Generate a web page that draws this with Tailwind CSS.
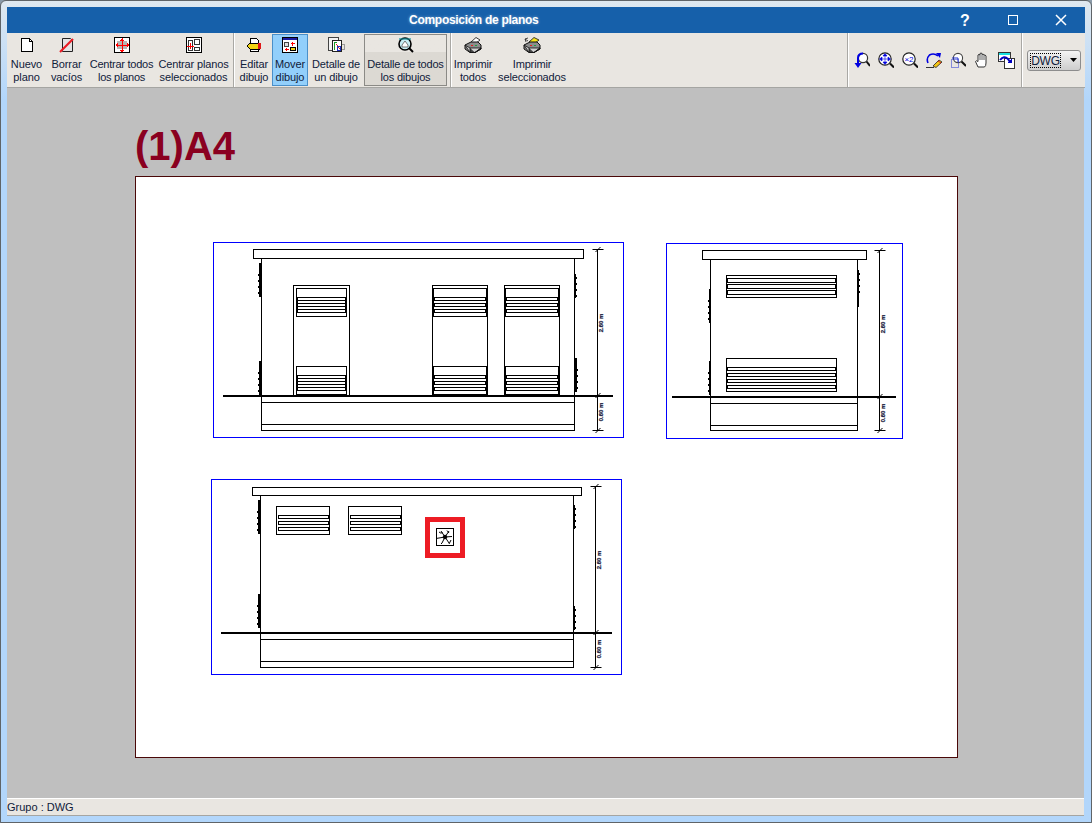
<!DOCTYPE html>
<html lang="es">
<head>
    <meta charset="UTF-8" />
    <title>Composición de planos</title>
    <script src="https://cdn.jsdelivr.net/npm/@tailwindcss/browser@4"></script>
</head>
<body class="bg-[#8a9aa8]">

    <!-- Ventana -->
    <div class="w-[1092px] h-[823px] flex flex-col pt-[7px] pl-[7px] pr-[6px] pb-[6px] rounded-t-[6px] border border-[#5f6468] bg-linear-to-b from-[#dfe8ef] from-[0%] to-[#b2d6fb] to-[12%] [font-family:'Liberation_Sans',Arial,sans-serif] text-[11px] leading-[13px] text-[#10203a]">

        <!-- Barra de título -->
        <div class="h-[26px] -ml-px -mt-px shrink-0 flex items-center bg-[#1660aa] text-white relative">
            <span class="ml-[402px] mt-[1px] text-[12px] font-bold tracking-[-0.28px] [text-shadow:0_0_3px_rgba(255,255,255,0.45)]">Composición de planos</span>
            <span class="ml-auto w-[20px] text-center text-[16px] font-bold mr-[32px]">?</span>
            <svg class="w-[12px] h-[12px] mr-[36px]" viewBox="0 0 12 12"><rect x="1.5" y="1.5" width="9" height="9" fill="none" stroke="#fff"/><line x1="1" y1="1.5" x2="11" y2="1.5" stroke="#fff"/></svg>
            <svg class="w-[12px] h-[12px] mr-[18px]" viewBox="0 0 12 12"><path d="M1 1 L11 11 M11 1 L1 11" stroke="#fff" stroke-width="1.5"/></svg>
        </div>

        <!-- Barra de herramientas -->
        <div class="h-[55px] -ml-px shrink-0 flex items-stretch bg-[#e9e6e1] border-b border-[#a5a5a2]">
            <div class="flex items-stretch py-px">
                <div class="w-[39px] flex flex-col items-center pt-[3px]">
                    <svg class="w-[18px] h-[16px] mb-[5px]" viewBox="0 0 18 16" shape-rendering="crispEdges"><path d="M3.5 1.5 H11.5 L14.5 4.5 V14.5 H3.5 Z" fill="#fff" stroke="#000"/><path d="M11.5 1.5 V4.5 H14.5" fill="none" stroke="#000"/></svg>
                    <span class="text-center tracking-[-0.1px]">Nuevo<br>plano</span>
                </div>
                <div class="w-[41px] flex flex-col items-center pt-[3px]">
                    <svg class="w-[18px] h-[16px] mb-[5px]" viewBox="0 0 18 16"><path d="M4.5 1.5 H12.5 L14.5 3.5 V14.5 H4.5 Z" fill="#e4e4e4" stroke="#222"/><path d="M2 15 L15 2" stroke="#ec1c24" stroke-width="2.2"/></svg>
                    <span class="text-center tracking-[-0.1px]">Borrar<br>vacíos</span>
                </div>
                <div class="w-[69px] flex flex-col items-center pt-[3px]">
                    <svg class="w-[18px] h-[16px] mb-[5px]" viewBox="0 0 18 16" shape-rendering="crispEdges"><rect x="1.5" y="0.5" width="15" height="15" fill="#fff" stroke="#000"/><rect x="4" y="4" width="10" height="8" fill="#b5b5b5"/><path d="M9 1 V15 M3 8 H15 M7 3 H11 M8 2 H10 M7 13 H11 M8 14 H10 M4 6 V10 M3 7 V9 M14 6 V10 M15 7 V9" stroke="#f00"/></svg>
                    <span class="text-center tracking-[-0.25px]">Centrar todos<br>los planos</span>
                </div>
                <div class="w-[75px] flex flex-col items-center pt-[3px]">
                    <svg class="w-[18px] h-[16px] mb-[5px]" viewBox="0 0 18 16" shape-rendering="crispEdges"><rect x="1.5" y="0.5" width="15" height="15" fill="#fff" stroke="#000"/><rect x="9.5" y="2.5" width="5" height="5" fill="#fff" stroke="#333"/><rect x="9.5" y="10.5" width="5" height="3" fill="#fff" stroke="#333"/><rect x="3.5" y="3.5" width="4" height="10" fill="#fff" stroke="#333"/><path d="M2 9 H9 M5.5 6 V12" stroke="#f00"/></svg>
                    <span class="text-center tracking-[-0.15px]">Centrar planos<br>seleccionados</span>
                </div>
            </div>
            <div class="w-[2px] ml-[2px] mr-px bg-[#a9a8a4] border-r border-white"></div>
            <div class="flex items-stretch py-px">
                <div class="w-[36px] flex flex-col items-center pt-[3px]">
                    <svg class="w-[18px] h-[16px] mb-[5px]" viewBox="0 0 18 16" shape-rendering="crispEdges"><path d="M5.5 1.5 H11.5 L13.5 3.5 V14.5 H5.5 Z" fill="#fff" stroke="#000"/><path d="M2 9 L5 6 H14 V12 H5 Z" fill="#f2d513" stroke="#000"/><rect x="13" y="6" width="3" height="6" fill="#e01818"/></svg>
                    <span class="text-center tracking-[-0.1px]">Editar<br>dibujo</span>
                </div>
                <div class="w-[36px] flex flex-col items-center pt-[3px] bg-[#92cffb] border border-[#4a8fc9]">
                    <svg class="w-[18px] h-[16px] mb-[5px] -mt-px" viewBox="0 0 18 16" shape-rendering="crispEdges"><rect x="1.5" y="0.5" width="15" height="15" fill="#fff" stroke="#000"/><rect x="2" y="1" width="14" height="2" fill="#1a1aa0"/><rect x="3.5" y="5.5" width="4" height="4" fill="#ddd" stroke="#444"/><rect x="9.5" y="10.5" width="5" height="3" fill="#f2d513" stroke="#000"/><path d="M11.5 5 V9 M9.5 6 H13.5 M5.5 11 V14 M3.5 12.5 H7.5" stroke="#f00"/></svg>
                    <span class="text-center tracking-[-0.1px]">Mover<br>dibujo</span>
                </div>
                <div class="w-[56px] flex flex-col items-center pt-[3px]">
                    <svg class="w-[18px] h-[16px] mb-[5px]" viewBox="0 0 18 16" shape-rendering="crispEdges"><rect x="1.5" y="0.5" width="10" height="13" fill="#f3f3f3" stroke="#444"/><rect x="5.5" y="3.5" width="9" height="11" fill="#fff" stroke="#222"/><path d="M7 5 V13 M7 5 H10" stroke="#1a9a2a"/><path d="M9 7 L13 12" stroke="#e02020"/><rect x="10" y="9" width="3" height="4" fill="none" stroke="#2030c0"/><path d="M15 7 H17 V12 H15" fill="none" stroke="#999"/></svg>
                    <span class="text-center tracking-[-0.15px]">Detalle de<br>un dibujo</span>
                </div>
                <div class="w-[83px] flex flex-col items-center pt-[3px] border border-[#8b8a86] bg-linear-to-b from-[#e9e6e1] from-[35%] to-[#dcd9d3] to-[35%]">
                    <svg class="w-[18px] h-[16px] mb-[5px] -mt-px" viewBox="0 0 18 16"><circle cx="8" cy="7" r="6" fill="#c7eef5" stroke="#000" stroke-width="1.6"/><path d="M5 8 L8 4 L11 8 V10 H5 Z" fill="#fff" stroke="#555" stroke-width="0.8"/><path d="M12 11 L16 15" stroke="#000" stroke-width="2"/><path d="M2 2 H14" stroke="#16909a" stroke-width="1.2"/></svg>
                    <span class="text-center tracking-[-0.2px]">Detalle de todos<br>los dibujos</span>
                </div>
            </div>
            <div class="w-[2px] ml-[3px] bg-[#a9a8a4] border-r border-white"></div>
            <div class="flex items-stretch py-px">
                <div class="w-[42px] flex flex-col items-center pt-[3px]">
                    <svg class="w-[18px] h-[16px] mb-[5px]" viewBox="0 0 18 16"><path d="M7 5 L12 0.500 L16 3 L11 7 Z" fill="#fff" stroke="#222" stroke-width="0.9"/><path d="M1 8 L7 5 H14 L17 8 V12 L11 15.500 H6 L1 12 Z" fill="#8c8c8c" stroke="#111"/><path d="M1 8 L6 11 H17 L11 15.500 H6 Z" fill="#d0d0d0" stroke="#111" stroke-width="0.8"/><path d="M6 11 V15.500 H11 L17 11 V12 L11 15.500" fill="#444" stroke="#111" stroke-width="0.8"/><rect x="7" y="8" width="2" height="1" fill="#e02020"/><rect x="11" y="8" width="2" height="1" fill="#20a040"/></svg>
                    <span class="text-center tracking-[-0.15px]">Imprimir<br>todos</span>
                </div>
                <div class="w-[76px] flex flex-col items-center pt-[3px]">
                    <svg class="w-[18px] h-[16px] mb-[5px]" viewBox="0 0 18 16"><path d="M2 2 L5 4 M3 5 L2 2 L5 1" fill="none" stroke="#222" stroke-width="0.8"/><path d="M6 5 L11 0.500 L16 3 L11 7 Z" fill="#f5e51a" stroke="#222" stroke-width="0.9"/><path d="M1 8 L7 5 H14 L17 8 V12 L11 15.500 H6 L1 12 Z" fill="#8c8c8c" stroke="#111"/><path d="M1 8 L6 11 H17 L11 15.500 H6 Z" fill="#d0d0d0" stroke="#111" stroke-width="0.8"/><path d="M6 11 V15.500 H11 L17 11 V12 L11 15.500" fill="#444" stroke="#111" stroke-width="0.8"/><rect x="7" y="8" width="2" height="1" fill="#e02020"/><rect x="11" y="8" width="2" height="1" fill="#20a040"/></svg>
                    <span class="text-center tracking-[-0.15px]">Imprimir<br>seleccionados</span>
                </div>
            </div>

            <!-- Zoom -->
            <div class="ml-auto w-[2px] bg-[#a9a8a4] border-r border-white"></div>
            <div class="flex items-center w-[172px] pl-[5px] gap-[8px]">
                <svg class="w-[16px] h-[16px] shrink-0" viewBox="0 0 16 16"><circle cx="9" cy="6" r="4.6" fill="#fff" stroke="#333" stroke-width="1.2"/><path d="M12.5 9.5 L16 14" stroke="#111" stroke-width="2"/><path d="M4 14 V6 Q4 1.5 9 1.5" fill="none" stroke="#0000e0" stroke-width="2"/><path d="M0.5 11 H7.5 L4 16 Z" fill="#0000e0"/></svg>
                <svg class="w-[16px] h-[16px] shrink-0" viewBox="0 0 16 16"><circle cx="7" cy="7" r="6.2" fill="#fff" stroke="#222" stroke-width="1.2"/><path d="M12 11.5 L16 15.5" stroke="#111" stroke-width="2"/><path d="M7 1.5 L9 4 H5 Z M7 12.5 L9 10 H5 Z M1.5 7 L4 5 V9 Z M12.5 7 L10 5 V9 Z M4 7 H10 M7 4 V10" fill="#0000e0" stroke="#0000e0" stroke-width="0.6"/></svg>
                <svg class="w-[16px] h-[16px] shrink-0" viewBox="0 0 16 16"><circle cx="7" cy="7" r="6.2" fill="#fff" stroke="#222" stroke-width="1.2"/><path d="M12 11.5 L16 15.5" stroke="#111" stroke-width="2"/><text x="7" y="10" text-anchor="middle" font-size="8" fill="#0000e0" font-family="Liberation Sans">×2</text></svg>
                <svg class="w-[16px] h-[16px] shrink-0" viewBox="0 0 16 16"><path d="M12 4 Q8 0.5 3.5 3 Q0 6.5 2 11" fill="none" stroke="#0000e0" stroke-width="1.6"/><path d="M10 1 L15 1 L14 6 Z" fill="#0000e0"/><path d="M0 15.5 H8" stroke="#333"/><path d="M7 14 L13 8 L16 10 L10 15.5 Z" fill="#f2c513" stroke="#222" stroke-width="0.8"/><path d="M12 9 L15 11" stroke="#e02020"/></svg>
                <svg class="w-[16px] h-[16px] shrink-0" viewBox="0 0 16 16"><circle cx="8" cy="6" r="4.6" fill="#fff" stroke="#444" stroke-width="1.1"/><path d="M11.5 9.5 L16 14" stroke="#111" stroke-width="2"/><rect x="1.5" y="7.5" width="7" height="8" fill="none" stroke="#2030d0" stroke-dasharray="1 1"/><path d="M2 6 H8 V10" fill="none" stroke="#2030d0"/></svg>
                <svg class="w-[16px] h-[16px] shrink-0" viewBox="0 0 16 16"><path d="M4 15 L1.5 9.5 Q2 8 4 9.5 V3 Q5 1.8 6 3 V1.5 Q7 0.5 8 1.5 V2.5 Q9.3 1.5 10 3 Q11.3 2.5 12 4 V11 Q12 14 10.5 15 Z" fill="#fff" stroke="#333" stroke-width="1"/><path d="M6 3 V8 M8 2.5 V8 M10 3 V8" stroke="#333" stroke-width="0.8"/></svg>
                <svg class="w-[17px] h-[17px] shrink-0" viewBox="0 0 17 17" shape-rendering="crispEdges"><rect x="0.5" y="0.5" width="12" height="9" fill="#fff" stroke="#333"/><rect x="1" y="1" width="11" height="2" fill="#18e0e0"/><rect x="6.5" y="6.5" width="10" height="10" fill="#fff" stroke="#333"/><path d="M2 8 Q6 3 10 7 L12 10" fill="none" stroke="#0000c0" stroke-width="2" shape-rendering="auto"/><path d="M9 11 H14 V7 Z" fill="#0000c0"/></svg>
            </div>
            <div class="w-[2px] bg-[#a9a8a4] border-r border-white"></div>
            <div class="flex items-center pl-[4px] w-[62px]">
                <div class="w-[54px] h-[21px] flex items-center rounded-[3px] border border-[#8d8d8d] bg-linear-to-b from-[#f4f4f4] to-[#cdcdcd] pl-[2px] text-[12px] tracking-[-0.2px]">
                    <span class="w-[31px] h-[15px] leading-[14px] text-center border border-dotted border-black">DWG</span>
                    <svg class="w-[7px] h-[4px] ml-[9px]" viewBox="0 0 7 4"><path d="M0 0 H7 L3.500 4 Z" fill="#000"/></svg>
                </div>
            </div>
        </div>

        <!-- Lienzo -->
        <div class="flex-1 -ml-px mr-px bg-[#bfbfbf] pl-[128px] pt-[36px] border-b border-white min-h-0">
            <div class="text-[40px] leading-[45px] h-[52px] font-bold text-[#8a0020]">(1)A4</div>
            <div class="w-[823px] h-[582px] relative bg-white border border-[#4a0808]">
                <svg class="absolute inset-0 block" width="821" height="580" viewBox="136 177 821 580" shape-rendering="crispEdges" font-family="Liberation Sans" font-weight="bold" font-size="6">
                    <defs>
                        <!-- rejillas de 50, 54 y 53 px -->
                        <g id="rej50">
                            <rect x="0.5" y="0.5" width="50" height="28" fill="#fff" stroke="#000"/>
                            <path d="M1 9 V25 M50 9 V25" stroke="#000" stroke-width="2"/>
                            <rect x="1.5" y="9.5" width="48" height="3" fill="#fff" stroke="#000"/>
                            <rect x="1.5" y="15.5" width="48" height="3" fill="#fff" stroke="#000"/>
                            <rect x="1.5" y="21.5" width="48" height="3" fill="#fff" stroke="#000"/>
                        </g>
                        <g id="rej54">
                            <rect x="0.5" y="0.5" width="55" height="28" fill="#fff" stroke="#000"/>
                            <path d="M1 0 V29 M55 0 V29" stroke="#000" stroke-width="2"/>
                            <rect x="2.5" y="9.5" width="51" height="3" fill="#fff" stroke="#000"/>
                            <rect x="2.5" y="15.5" width="51" height="3" fill="#fff" stroke="#000"/>
                            <rect x="2.5" y="21.5" width="51" height="3" fill="#fff" stroke="#000"/>
                        </g>
                        <g id="rej53">
                            <rect x="0.5" y="0.5" width="53" height="28" fill="#fff" stroke="#000"/>
                            <rect x="2.5" y="9.5" width="50" height="3" fill="#fff" stroke="#000"/>
                            <rect x="2.5" y="15.5" width="50" height="3" fill="#fff" stroke="#000"/>
                            <rect x="2.5" y="21.5" width="50" height="3" fill="#fff" stroke="#000"/>
                        </g>
                        <!-- anclajes laterales -->
                        <path id="anc" d="M1 0 V34 M-1 12 H1 M-1 18 H1 M-1 24 H1 M-1 30 H1" fill="none" stroke="#000" stroke-width="2"/>
                        <path id="anc2" d="M1 0 V24 M3 4 H1 M3 10 H1 M3 16 H1 M3 22 H1" fill="none" stroke="#000" stroke-width="2"/>
                        <path id="tick" d="M-5 0.5 H6 M-2 3 L3 -2" fill="none" stroke="#000" shape-rendering="auto"/>
                    </defs>

                    <!-- Alzado frontal -->
                    <rect x="213.5" y="242.5" width="410" height="195" fill="none" stroke="#0000ff"/>
                    <rect x="253.5" y="249.5" width="330" height="9" fill="#fff" stroke="#000"/>
                    <path d="M261.5 258 V430.5 H574.5 V258 M261.5 402.5 H574.5 M261.5 424.5 H574.5" fill="none" stroke="#000"/>
                    <rect x="223" y="395" width="390" height="2" fill="#000"/>
                    <use href="#anc" x="259" y="263"/><use href="#anc" x="259" y="361"/>
                    <use href="#anc2" x="574" y="274"/><use href="#anc" transform="translate(577 358) scale(-1 1)"/>
                    <rect x="293.5" y="285.5" width="56" height="110" fill="#fff" stroke="#000"/>
                    <use href="#rej50" x="296" y="288"/><use href="#rej50" x="296" y="366"/>
                    <rect x="432.5" y="285.5" width="55" height="110" fill="#fff" stroke="#000"/>
                    <use href="#rej54" x="432" y="288"/><use href="#rej54" x="432" y="366"/>
                    <rect x="504.5" y="285.5" width="55" height="110" fill="#fff" stroke="#000"/>
                    <use href="#rej54" x="504" y="288"/><use href="#rej54" x="504" y="366"/>
                    <path d="M597.5 249 V430" stroke="#000"/>
                    <use href="#tick" x="597.5" y="249"/><use href="#tick" x="597.5" y="395"/><use href="#tick" x="597.5" y="430"/>
                    <text transform="translate(603 323) rotate(-90)" text-anchor="middle" fill="#1a1a40" stroke="#1a1a40" stroke-width="0.25">2.60 m</text>
                    <text transform="translate(603 412) rotate(-90)" text-anchor="middle" fill="#1a1a40" stroke="#1a1a40" stroke-width="0.25">0.60 m</text>

                    <!-- Alzado lateral -->
                    <rect x="666.5" y="243.5" width="236" height="195" fill="none" stroke="#0000ff"/>
                    <rect x="702.5" y="250.5" width="164" height="9" fill="#fff" stroke="#000"/>
                    <path d="M710.5 259 V430.5 H857.5 V259 M710.5 403.5 H857.5 M710.5 425.5 H857.5" fill="none" stroke="#000"/>
                    <rect x="672" y="396" width="224" height="2" fill="#000"/>
                    <use href="#anc" x="708.5" y="289"/><use href="#anc" x="708.5" y="361"/>
                    <use href="#anc2" x="857" y="270"/><rect x="857" y="270" width="2" height="37" fill="#000"/>
                    <rect x="726.5" y="275.5" width="110" height="22" fill="#fff" stroke="#000"/>
                    <rect x="727.5" y="278.5" width="108" height="4" fill="#fff" stroke="#000"/>
                    <rect x="727.5" y="284.5" width="108" height="4" fill="#fff" stroke="#000"/>
                    <rect x="727.5" y="290.5" width="108" height="4" fill="#fff" stroke="#000"/>
                    <rect x="726.5" y="358.5" width="110" height="33" fill="#fff" stroke="#000"/>
                    <rect x="727.5" y="367.5" width="108" height="3" fill="#fff" stroke="#000"/>
                    <rect x="727.5" y="373.5" width="108" height="3" fill="#fff" stroke="#000"/>
                    <rect x="727.5" y="379.5" width="108" height="3" fill="#fff" stroke="#000"/>
                    <rect x="727.5" y="385.5" width="108" height="3" fill="#fff" stroke="#000"/>
                    <path d="M879.5 250 V430" stroke="#000"/>
                    <use href="#tick" x="879.5" y="250"/><use href="#tick" x="879.5" y="396"/><use href="#tick" x="879.5" y="430"/>
                    <text transform="translate(885 324) rotate(-90)" text-anchor="middle" fill="#1a1a40" stroke="#1a1a40" stroke-width="0.25">2.60 m</text>
                    <text transform="translate(885 413) rotate(-90)" text-anchor="middle" fill="#1a1a40" stroke="#1a1a40" stroke-width="0.25">0.60 m</text>

                    <!-- Alzado posterior -->
                    <rect x="211.5" y="479.5" width="410" height="195" fill="none" stroke="#0000ff"/>
                    <rect x="252.5" y="487.5" width="329" height="8" fill="#fff" stroke="#000"/>
                    <path d="M260.5 495 V667.5 H573.5 V495 M260.5 639.5 H573.5 M260.5 661.5 H573.5" fill="none" stroke="#000"/>
                    <rect x="221" y="632" width="391" height="2" fill="#000"/>
                    <use href="#anc" x="258" y="500"/><use href="#anc" x="258" y="594"/>
                    <use href="#anc2" x="573" y="505"/><use href="#anc2" x="573" y="606"/>
                    <use href="#rej53" x="276" y="506"/><use href="#rej53" x="348" y="506"/>
                    <path d="M595.5 486 V667" stroke="#000"/>
                    <use href="#tick" x="595.5" y="486"/><use href="#tick" x="595.5" y="632"/><use href="#tick" x="595.5" y="667"/>
                    <text transform="translate(601 560) rotate(-90)" text-anchor="middle" fill="#1a1a40" stroke="#1a1a40" stroke-width="0.25">2.60 m</text>
                    <text transform="translate(601 649) rotate(-90)" text-anchor="middle" fill="#1a1a40" stroke="#1a1a40" stroke-width="0.25">0.60 m</text>

                    <!-- Ventilador marcado -->
                    <rect x="427.5" y="519.5" width="35" height="36" fill="#fff" stroke="#ed1c24" stroke-width="5"/>
                    <rect x="436.5" y="528.5" width="17" height="17" fill="#fff" stroke="#000"/>
                    <g shape-rendering="auto" fill="none" stroke="#000">
                        <circle cx="445" cy="537" r="1.8" fill="#000"/>
                        <path d="M445 537 L441 531 M439 532 Q441 534 442.500 532.500 M445 537 L449 531 M447 530.500 L449 533 M445 537 L452 536.500 M445 537 L439 538 L436 538.500 M445 537 L442 543 L441 544 M445 537 L449 543 M451 540 L449 544"/>
                    </g>
                </svg>
            </div>
        </div>

        <!-- Barra de estado -->
        <div class="h-[17px] -ml-px mr-px shrink-0 bg-[#e9e6e1] text-[11px] leading-[16px] border-b border-[#a5a5a2]">Grupo : DWG</div>
    </div>

</body>
</html>
